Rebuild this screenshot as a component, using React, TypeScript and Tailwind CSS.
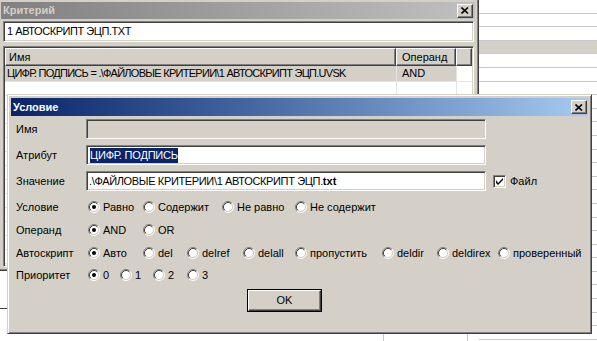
import React from "react";

const sunken =
  "border border-t-[#808080] border-l-[#808080] border-b-white border-r-white shadow-[inset_1px_1px_0_#404040,inset_-1px_-1px_0_#d4d0c8]";
const raised =
  "border border-t-white border-l-white border-b-[#404040] border-r-[#404040] shadow-[inset_-1px_-1px_0_#808080]";

function RadioIcon({ checked }: { checked?: boolean }) {
  return (
    <svg width="12" height="12" viewBox="0 0 12 12" className="shrink-0">
      <circle cx="6" cy="6" r="4.5" fill="#ffffff" />
      <path d="M2.11 9.89 A5.5 5.5 0 0 1 9.89 2.11" stroke="#808080" strokeWidth="1" fill="none" />
      <path d="M9.89 2.11 A5.5 5.5 0 0 1 2.11 9.89" stroke="#ffffff" strokeWidth="1" fill="none" />
      <path d="M2.82 9.18 A4.5 4.5 0 0 1 9.18 2.82" stroke="#404040" strokeWidth="1" fill="none" />
      <path d="M9.18 2.82 A4.5 4.5 0 0 1 2.82 9.18" stroke="#d4d0c8" strokeWidth="1" fill="none" />
      {checked && <circle cx="6" cy="6" r="2" fill="#000000" />}
    </svg>
  );
}

function Radio({ label, checked, w }: { label: string; checked?: boolean; w?: string }) {
  return (
    <div className={`flex items-center gap-[3px] shrink-0 ${w ?? ""}`}>
      <RadioIcon checked={checked} />
      <span className="whitespace-nowrap">{label}</span>
    </div>
  );
}

function CloseBtn() {
  return (
    <div className={`w-[16px] h-[14px] bg-[#d4d0c8] ${raised} flex items-center justify-center`}>
      <svg width="8" height="7" viewBox="0 0 8 7">
        <path d="M0.5 0.5 L7 6.5 M7 0.5 L0.5 6.5" stroke="#000" strokeWidth="1.6" />
      </svg>
    </div>
  );
}

function RadioRow({ label, h, children }: { label: string; h: string; children: React.ReactNode }) {
  return (
    <div className={`flex items-center ${h}`}>
      <div className="w-[77px] pl-[5px] shrink-0">{label}</div>
      {children}
    </div>
  );
}

export default function App() {
  const gridRows = Array.from({ length: 26 });
  const listRows = Array.from({ length: 14 });
  return (
    <div
      className="relative w-[597px] h-[341px] overflow-hidden bg-white text-[11px] text-black leading-none"
      style={{ fontFamily: '"Liberation Sans", Arial, sans-serif' }}
    >
      {/* desktop background */}
      <div className="flex w-full h-full">
        <div className="w-[479px] h-full relative shrink-0">
          <div className="absolute left-[383px] top-0 bottom-0 w-px bg-[#c8c8c8]" />
          <div className="absolute left-[467px] top-0 bottom-0 w-px bg-[#c8c8c8]" />
          <div className="absolute left-0 top-[308px] w-[8px] h-px bg-[#404040]" />
        </div>
        <div className="flex-1 flex flex-col">
          {gridRows.map((_, i) => (
            <div
              key={i}
              className={`h-[13.6px] shrink-0 border-b border-[#c8c8c8] ${i === 3 ? "bg-[#d4d0c8]" : ""}`}
            />
          ))}
        </div>
      </div>

      {/* background window Критерий */}
      <div className="absolute left-0 top-0 w-[479px] h-[271px] bg-[#d4d0c8] border-r border-b border-[#404040] shadow-[inset_-1px_-1px_0_#808080] pt-[2px] pl-[1px] pr-[3px] pb-[3px] flex flex-col">
        <div className="h-[17px] shrink-0 flex items-center justify-between bg-gradient-to-r from-[#808080] to-[#c0c0c0] pl-[2px] pr-[2px]">
          <span className="font-bold text-[#d4d0c8]">Критерий</span>
          <CloseBtn />
        </div>
        <div className={`mt-[2px] ml-[2px] mr-[1px] h-[21px] shrink-0 bg-white ${sunken} flex items-center pl-[3px] tracking-[-0.45px]`}>
          1 АВТОСКРИПТ ЭЦП.TXT
        </div>
        <div className={`mt-[4px] ml-[2px] mr-[1px] flex-1 bg-white ${sunken} p-px overflow-hidden flex flex-col`}>
          <div className="flex h-[18px] shrink-0">
            <div className={`w-[391px] bg-[#d4d0c8] ${raised} flex items-center pl-[3px]`}>Имя</div>
            <div className={`w-[60px] bg-[#d4d0c8] ${raised} flex items-center pl-[5px]`}>Операнд</div>
            <div className={`flex-1 bg-[#d4d0c8] ${raised}`} />
          </div>
          <div className="flex h-[16px] shrink-0 bg-[#d4d0c8] border-b border-[#e4e4e4]">
            <div className="w-[391px] flex items-center pl-[2px] whitespace-nowrap tracking-[-0.72px]">
              ЦИФР. ПОДПИСЬ = .\ФАЙЛОВЫЕ КРИТЕРИИ\1 АВТОСКРИПТ ЭЦП.UVSK
            </div>
            <div className="w-[60px] flex items-center pl-[5px] border-l border-[#e4e4e4]">AND</div>
            <div className="flex-1 border-l border-[#e4e4e4] bg-white" />
          </div>
          {listRows.map((_, i) => (
            <div key={i} className="flex h-[14px] shrink-0 border-b border-[#e4e4e4]">
              <div className="w-[391px]" />
              <div className="w-[60px] border-l border-[#e4e4e4]" />
              <div className="flex-1 border-l border-[#e4e4e4]" />
            </div>
          ))}
        </div>
      </div>

      {/* dialog Условие */}
      <div className="absolute left-[7px] top-[94px] w-[585px] h-[240px] bg-[#d4d0c8] border border-t-[#d4d0c8] border-l-[#d4d0c8] border-b-[#404040] border-r-[#404040] shadow-[inset_1px_1px_0_#ffffff,inset_-1px_-1px_0_#808080] p-[3px] flex flex-col">
        <div className="h-[18px] shrink-0 flex items-center justify-between bg-gradient-to-r from-[#0a246a] to-[#a6caf0] pl-[2px] pr-px">
          <span className="font-bold text-white">Условие</span>
          <CloseBtn />
        </div>
        <div className="flex flex-col pt-[3px]">
          <div className="flex items-center h-[20px]">
            <div className="w-[75px] pl-[5px] shrink-0">Имя</div>
            <div className={`w-[400px] h-[20px] bg-[#d4d0c8] ${sunken}`} />
          </div>
          <div className="flex items-center h-[20px] mt-[6px]">
            <div className="w-[75px] pl-[5px] shrink-0">Атрибут</div>
            <div className={`w-[400px] h-[20px] bg-white ${sunken} flex items-center pl-[3px]`}>
              <span className="bg-[#0a246a] text-white py-[2px] whitespace-nowrap tracking-[-0.2px]">ЦИФР. ПОДПИСЬ</span>
            </div>
          </div>
          <div className="flex items-center h-[20px] mt-[6px]">
            <div className="w-[75px] pl-[5px] shrink-0">Значение</div>
            <div className={`w-[400px] h-[20px] bg-white ${sunken} flex items-center pl-[2px] whitespace-nowrap`}>
              <span className="tracking-[-0.35px]">.\ФАЙЛОВЫЕ КРИТЕРИИ\1 АВТОСКРИПТ ЭЦП.</span>
              <b>txt</b>
            </div>
            <div className={`ml-[7px] w-[13px] h-[13px] bg-white ${sunken} flex items-center justify-center`}>
              <svg width="7" height="7" viewBox="0 0 7 7">
                <path d="M0 2 L0 5 L2 7 L7 2 L7 0 L2 5 Z" fill="#000" />
              </svg>
            </div>
            <span className="ml-[4px]">Файл</span>
          </div>
          <div className="mt-[5px] flex flex-col">
            <RadioRow label="Условие" h="h-[22px]">
              <Radio label="Равно" checked w="w-[55px]" />
              <Radio label="Содержит" w="w-[79px]" />
              <Radio label="Не равно" w="w-[73px]" />
              <Radio label="Не содержит" />
            </RadioRow>
            <RadioRow label="Операнд" h="h-[24px]">
              <Radio label="AND" checked w="w-[55px]" />
              <Radio label="OR" />
            </RadioRow>
            <RadioRow label="Автоскрипт" h="h-[22px]">
              <Radio label="Авто" checked w="w-[55px]" />
              <Radio label="del" w="w-[44px]" />
              <Radio label="delref" w="w-[56px]" />
              <Radio label="delall" w="w-[52px]" />
              <Radio label="пропустить" w="w-[87px]" />
              <Radio label="deldir" w="w-[55px]" />
              <Radio label="deldirex" w="w-[61px]" />
              <Radio label="проверенный" />
            </RadioRow>
            <RadioRow label="Приоритет" h="h-[22px]">
              <Radio label="0" checked w="w-[32px]" />
              <Radio label="1" w="w-[33px]" />
              <Radio label="2" w="w-[34px]" />
              <Radio label="3" />
            </RadioRow>
          </div>
          <div className="mt-[3px] ml-[236px] w-[75px] h-[23px] border border-black">
            <div className={`w-full h-full bg-[#d4d0c8] ${raised} flex items-center justify-center`}>OK</div>
          </div>
        </div>
      </div>
    </div>
  );
}
